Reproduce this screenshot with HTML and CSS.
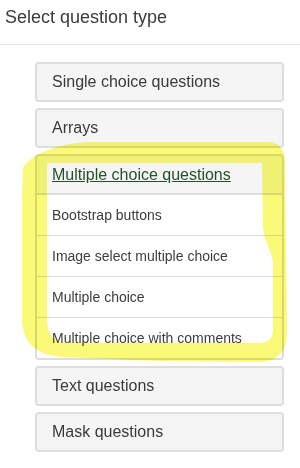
FILE: index.html
```html
<!DOCTYPE html>
<html>
<head>
<meta charset="utf-8">
<link rel="stylesheet" href="styles.css">
</head>
<body>
<div class="page">
  <div class="header">Select question type</div>
  <div class="groups">
    <div class="panel"><div class="panel-heading">Single choice questions</div></div>
    <div class="panel"><div class="panel-heading">Arrays</div></div>
    <div class="panel open">
      <div class="panel-heading"><a class="heading-link">Multiple choice questions</a></div>
      <ul class="list">
        <li class="item">Bootstrap buttons</li>
        <li class="item">Image select multiple choice</li>
        <li class="item">Multiple choice</li>
        <li class="item">Multiple choice with comments</li>
      </ul>
    </div>
    <div class="panel"><div class="panel-heading">Text questions</div></div>
    <div class="panel"><div class="panel-heading">Mask questions</div></div>
  </div>
  <svg class="highlight" width="300" height="468" viewBox="0 0 300 468">
    <path fill-rule="evenodd" d="M23,168 C30,155 55,144 88,142 L268,142 C280,142 285,150 285,162 L286,250 L287,332 C287,350 280,360 262,362 L160,361 L62,357 C38,355 24,345 22,322 L22,200 Z M47,163 L262,163 L263,225 C264,245 273,250 273,265 L273,330 C273,338 268,343 260,343 L68,343 C55,343 47,335 47,320 Z"/>
  </svg>
</div>
</body>
</html>
```
FILE: styles.css
```css
html, body {
  margin: 0;
  padding: 0;
  background: #ffffff;
}

.page {
  position: relative;
  width: 300px;
  height: 468px;
  overflow: hidden;
  font-family: "Liberation Sans", Arial, sans-serif;
  color: #333333;
}

.header {
  box-sizing: border-box;
  height: 45px;
  padding: 6px 5px 0;
  font-size: 18px;
  line-height: 22px;
  color: #3a3a3a;
  border-bottom: 1px solid #e5e5e5;
}

.groups {
  display: flex;
  flex-direction: column;
  gap: 6px;
  padding: 17px 16px 0 35px;
}

.panel {
  border: 2px solid #dddddd;
  border-radius: 4px;
  background: #f5f5f5;
  overflow: hidden;
}

.panel-heading {
  box-sizing: border-box;
  height: 36px;
  padding: 0 15px;
  display: flex;
  align-items: center;
  font-size: 16px;
  color: #3a3a3a;
}

.open .panel-heading {
  height: 39px;
  border-bottom: 2px solid #dddddd;
}

.heading-link {
  color: #24502a;
  text-decoration: underline;
}

.list {
  list-style: none;
  margin: 0;
  padding: 0;
  background: #ffffff;
}

.item {
  box-sizing: border-box;
  height: 41px;
  padding: 0 15px;
  display: flex;
  align-items: center;
  font-size: 14px;
  color: #3d3d3d;
  border-top: 1px solid #dddddd;
}

.item:first-child {
  height: 40px;
  border-top: none;
}

.highlight {
  position: absolute;
  top: 0;
  left: 0;
  pointer-events: none;
  mix-blend-mode: multiply;
  fill: #fafa78;
}
```
